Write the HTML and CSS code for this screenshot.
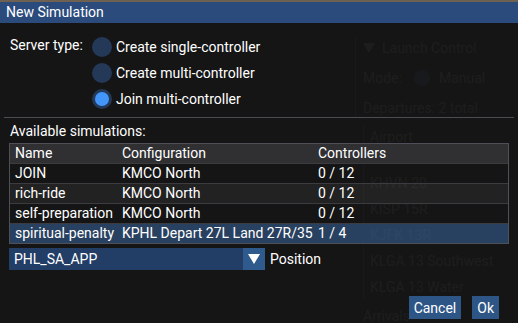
FILE: index.html
```html
<!DOCTYPE html>
<html lang="en">
<head>
<meta charset=utf-8>
<title>New Simulation</title>
<link rel="stylesheet" href="styles.css">
</head>
<body>
  <div class="desk">
    <div class="bgwin">
      <div class="bg-rule"></div>
      <div class="bg-line bg-launch"><span class="bg-tri"></span>Launch Control</div>
      <div class="bg-line bg-mode">Mode:<span class="bg-radio"></span>Manual</div>
      <div class="bg-line bg-deps">Departures: 2 total</div>
      <div class="bg-list">
        <div class="bg-item bg-airport">Airport</div>
        <div class="bg-item bg-gap">KHVN 20</div>
        <div class="bg-item">KISP 15R</div>
        <div class="bg-item">KJFK 13R</div>
        <div class="bg-item">KLGA 13 Southwest</div>
        <div class="bg-item">KLGA 13 Water</div>
      </div>
      <div class="bg-line bg-arr">Arrivals</div>
    </div>

    <div class="dialog">
      <div class="titlebar">New Simulation</div>
      <div class="content">
        <div class="server">
          <div class="server-label">Server type:</div>
          <div class="radios">
            <div class="radio"><span class="dot"></span>Create single-controller</div>
            <div class="radio"><span class="dot"></span>Create multi-controller</div>
            <div class="radio on"><span class="dot"></span>Join multi-controller</div>
          </div>
        </div>
        <div class="separator"></div>
        <div class="section">Available simulations:</div>
        <div class="table">
          <div class="row head"><span class="c1">Name</span><span class="c2">Configuration</span><span class="c3">Controllers</span></div>
          <div class="row"><span class="c1">JOIN</span><span class="c2">KMCO North</span><span class="c3">0 / 12</span></div>
          <div class="row alt"><span class="c1">rich-ride</span><span class="c2">KMCO North</span><span class="c3">0 / 12</span></div>
          <div class="row"><span class="c1">self-preparation</span><span class="c2">KMCO North</span><span class="c3">0 / 12</span></div>
          <div class="row sel"><span class="c1">spiritual-penalty</span><span class="c2">KPHL Depart 27L Land 27R/35</span><span class="c3">1 / 4</span></div>
        </div>
        <div class="combo-row">
          <div class="combo">
            <span class="combo-value">PHL_SA_APP</span>
            <span class="combo-btn"><svg width="12" height="10" viewBox="0 0 12 10"><path d="M0 0H12L6 10Z" fill="#fff"/></svg></span>
          </div>
          <span class="combo-label">Position</span>
        </div>
        <div class="buttons">
          <button class="btn">Cancel</button>
          <button class="btn">Ok</button>
        </div>
      </div>
    </div>
  </div>
</body>
</html>
```

FILE: styles.css
```css
body { margin: 0; background: #151515; font-family: Roboto, "Liberation Sans", sans-serif; font-size: 14px; color: #fff; }
.desk { position: relative; width: 518px; height: 323px; overflow: hidden; background: #6e6152; }

/* window behind the dialog, seen through the dialog background */
.bgwin { position: absolute; left: 0; top: 2px; width: 518px; height: 321px; background: #151515; color: #9a9a9a; }
.bg-rule { position: absolute; left: 355px; top: 36px; width: 1px; height: 80px; background: #666; }
.bg-line { position: absolute; left: 363px; line-height: 18px; }
.bg-launch { top: 37px; }
.bg-tri { display: inline-block; width: 0; height: 0; border-left: 6px solid transparent; border-right: 6px solid transparent; border-top: 10px solid #9a9a9a; margin: 0 7px 0 0; }
.bg-mode { top: 67px; }
.bg-radio { display: inline-block; width: 16px; height: 16px; border-radius: 50%; background: #3a5a90; vertical-align: -3px; margin: 0 9px 0 12px; }
.bg-deps { top: 97px; }
.bg-list { position: absolute; left: 363px; top: 122px; border-left: 1px solid #555; padding-left: 6px; }
.bg-item { line-height: 26px; }
.bg-gap { margin-top: 20px; }
.bg-arr { top: 305px; }

/* dialog */
.dialog { position: absolute; left: 0; top: 2px; width: 518px; height: 321px; background: rgba(21, 21, 21, 0.94); }
.titlebar { height: 21px; line-height: 21px; padding-left: 6px; background: #2a4b7c; }
.content { padding: 14px 9px 0 9px; }

.server { display: flex; }
.server-label { width: 82px; padding-left: 1px; line-height: 16px; }
.radios { display: flex; flex-direction: column; gap: 6px; }
.radio { display: flex; align-items: center; height: 20px; }
.dot { width: 20px; height: 20px; border-radius: 50%; background: #243858; margin-right: 4px; box-sizing: border-box; }
.radio.on .dot { border: 3px solid #243858; background: #4296fa; }

.separator { height: 1px; background: #4b4b52; margin: 8px -5px 0 -5px; }
.section { padding-left: 1px; line-height: 17px; margin-top: 5px; }

.table { margin-top: 3px; border: 1px solid #4f4f59; width: 498px; }
.row { display: flex; height: 19px; line-height: 19px; border-top: 1px solid #3b3b40; }
.row.head { height: 19px; border-top: none; background: #303033; }
.row.alt { background: rgba(255, 255, 255, 0.06); }
.row.sel { background: rgba(66, 120, 190, 0.45); }
.c1 { width: 107px; padding-left: 5px; }
.c2 { width: 196px; }
.c3 { flex: 1; }

.combo-row { display: flex; align-items: center; margin-top: 4px; }
.combo { display: flex; width: 256px; height: 22px; background: #223e66; }
.combo-value { flex: 1; line-height: 22px; padding-left: 5px; }
.combo-btn { width: 22px; display: flex; align-items: center; justify-content: center; background: #2e5a8e; }
.combo-label { margin-left: 5px; }

.buttons { display: flex; justify-content: flex-end; gap: 11px; margin-top: 26px; padding-right: 10px; }
.btn { font: inherit; color: #fff; background: #2d5686; border: none; height: 23px; padding: 0 5px; }
```
